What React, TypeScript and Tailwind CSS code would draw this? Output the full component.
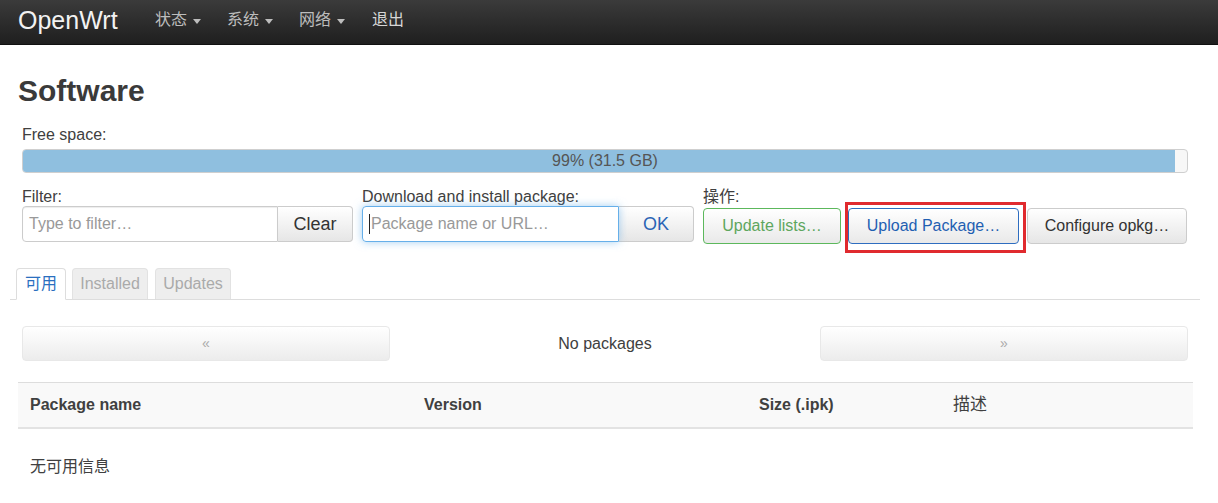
import React from "react";

const font = { fontFamily: '"Liberation Sans", Arial, "Noto Sans CJK SC", sans-serif' };

function Caret() {
  return <span className="inline-block w-0 h-0 border-t-[5px] border-t-current border-x-[4px] border-x-transparent ml-[6px] mt-[2px]" />;
}

function NavItem({ label, caret = true, cls = "" }: { label: string; caret?: boolean; cls?: string }) {
  return (
    <div className={`flex items-center text-[16px] text-[#bdbdbd] ${cls}`}>
      <span>{label}</span>
      {caret && <Caret />}
    </div>
  );
}

export default function App() {
  return (
    <div className="min-h-[503px] bg-white text-[#404040]" style={font}>
      {/* Navbar */}
      <div className="h-[45px] bg-linear-to-b from-[#3b3b3b] to-[#1f1f1f] flex items-center pb-[4px] pl-[18px] border-b border-[#111]">
        <div className="text-[25px] text-[#f2f2f2] leading-none w-[137px]">OpenWrt</div>
        <NavItem label="状态" cls="mr-[26px]" />
        <NavItem label="系统" cls="mr-[26px]" />
        <NavItem label="网络" cls="mr-[27px]" />
        <NavItem label="退出" caret={false} cls="text-[#d6d6d6]" />
      </div>

      <div className="px-[18px]">
        <h2 className="text-[30px] leading-[34px] font-bold mt-[29px] text-[#3a3a3a]">Software</h2>

        <div className="px-[4px] w-[1174px]">
          <div className="mt-[17px] text-[16px] leading-[20px]">Free space:</div>
          <div className="mt-[4px] h-[24px] border border-[#cfcfcf] rounded-[4px] bg-[#f7f7f7] relative overflow-hidden">
            <div className="absolute left-0 top-0 bottom-0 w-[99%] bg-[#8fbfdf]" />
            <div className="relative text-center text-[16px] leading-[22px] text-[#555]">99% (31.5 GB)</div>
          </div>

          <div className="mt-[15px] flex">
            <div className="w-[331px] mr-[9px]">
              <div className="text-[16px] leading-[18px]">Filter:</div>
              <div className="flex h-[36px]">
                <div className="w-[256px] border border-[#ccc] rounded-l-[4px] flex items-center pl-[6px] text-[16px] text-[#999] shadow-[inset_0_1px_1px_rgba(0,0,0,0.075)]">Type to filter…</div>
                <div className="w-[75px] border border-l-0 border-[#ccc] rounded-r-[4px] bg-linear-to-b from-white to-[#e6e6e6] flex items-center justify-center text-[18px] text-[#333]">Clear</div>
              </div>
            </div>
            <div className="w-[332px] mr-[9px]">
              <div className="text-[16px] leading-[18px]">Download and install package:</div>
              <div className="flex h-[36px]">
                <div className="w-[257px] border border-[#66afe9] rounded-l-[4px] flex items-center pl-[6px] text-[16px] text-[#999] shadow-[0_0_8px_rgba(102,175,233,0.6)] relative z-10">
                  <span className="w-[1px] h-[20px] bg-[#222] mr-[1px]" />Package name or URL…
                </div>
                <div className="w-[75px] border border-l-0 border-[#ccc] rounded-r-[4px] bg-linear-to-b from-white to-[#e6e6e6] flex items-center justify-center text-[18px] text-[#2a64b5]">OK</div>
              </div>
            </div>
            <div className="flex-1">
              <div className="text-[16px] leading-[18px]">操作:</div>
              <div className="flex h-[36px] mt-[2px] relative">
                <div className="w-[138px] border border-[#5cb85c] rounded-[4px] bg-linear-to-b from-white to-[#e9e9e9] flex items-center justify-center text-[16px] text-[#5ea65e] mr-[7px]">Update lists…</div>
                <div className="w-[171px] border border-[#2e6dc0] rounded-[4px] bg-linear-to-b from-white to-[#e9e9e9] flex items-center justify-center text-[16px] text-[#1f5fb2] mr-[8px]">Upload Package…</div>
                <div className="w-[160px] border border-[#ccc] rounded-[4px] bg-linear-to-b from-white to-[#e6e6e6] flex items-center justify-center text-[16px] text-[#333]">Configure opkg…</div>
                <div className="absolute left-[142px] top-[-6px] w-[181px] h-[51px] border-[3px] border-[#e02a2e] pointer-events-none" />
              </div>
            </div>
          </div>
        </div>
      </div>

      {/* Tabs */}
      <div className="mt-[24px] mx-[10px] w-[1190px] border-b border-[#ddd] flex h-[32px] items-end pl-[6px]">
        <div className="h-[32px] w-[50px] border border-[#ddd] border-b-white -mb-[1px] rounded-t-[4px] bg-white flex items-center justify-center text-[16px] text-[#2a6fbf] mr-[6px]">可用</div>
        <div className="h-[31px] w-[76px] border border-[#e2e2e2] border-b-0 rounded-t-[4px] bg-[#eeeeee] flex items-center justify-center text-[16px] text-[#aaa] mr-[7px]">Installed</div>
        <div className="h-[31px] w-[76px] border border-[#e2e2e2] border-b-0 rounded-t-[4px] bg-[#eeeeee] flex items-center justify-center text-[16px] text-[#aaa]">Updates</div>
      </div>

      <div className="px-[18px]">
        {/* Pager */}
        <div className="mt-[26px] px-[4px] w-[1174px] flex items-center h-[35px]">
          <div className="w-[368px] h-[35px] border border-[#e8e8e8] rounded-[4px] bg-linear-to-b from-white to-[#ececec] flex items-center justify-center text-[14px] text-[#aaa]">«</div>
          <div className="flex-1 text-center text-[16px] text-[#404040]">No packages</div>
          <div className="w-[368px] h-[35px] border border-[#e8e8e8] rounded-[4px] bg-linear-to-b from-white to-[#ececec] flex items-center justify-center text-[14px] text-[#aaa]">»</div>
        </div>

        {/* Table */}
        <div className="mt-[21px] w-[1175px]">
          <div className="h-[47px] bg-[#f9f9f9] border-t border-[#ddd] border-b-2 border-b-[#e3e3e3] flex items-center text-[16px] font-bold text-[#404040]">
            <div className="w-[394px] pl-[12px]">Package name</div>
            <div className="w-[335px] pl-[12px]">Version</div>
            <div className="w-[194px] pl-[12px]">Size (.ipk)</div>
            <div className="flex-1 pl-[12px] font-normal text-[17px]">描述</div>
          </div>
          <div className="mt-[28px] pl-[12px] text-[16px] leading-[20px] text-[#404040]">无可用信息</div>
        </div>
      </div>
    </div>
  );
}
